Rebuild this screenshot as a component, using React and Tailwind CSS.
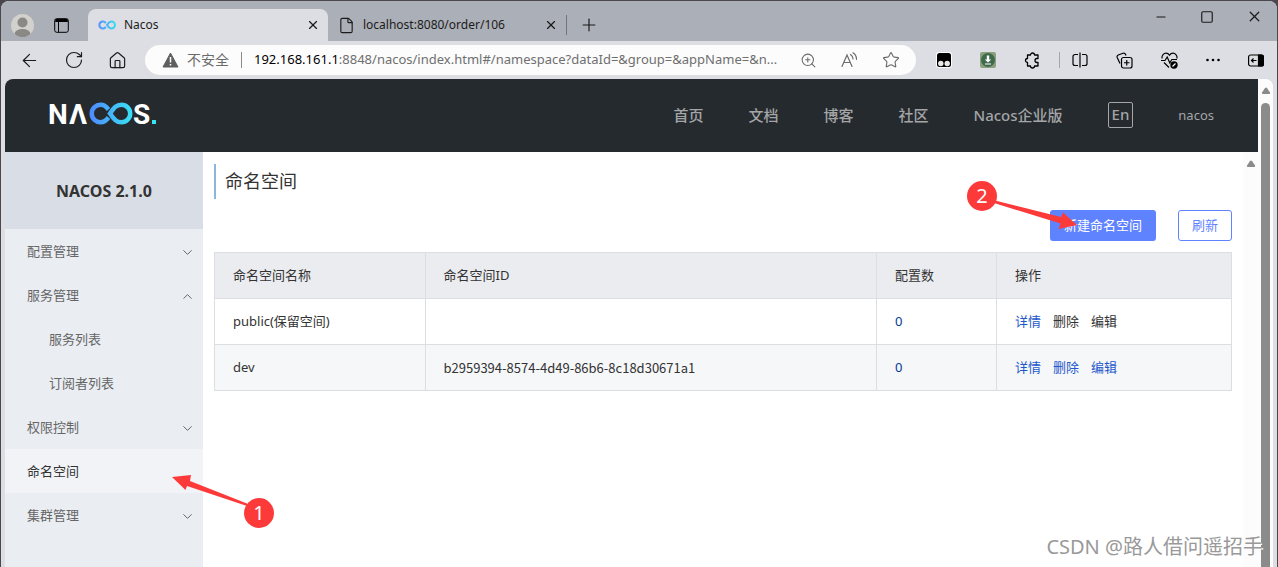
import { useState } from "react";
import { ArrowLeft, ChevronDown, ChevronUp, File, House, Minus, Plus, RotateCw, Square, Star, X, ZoomIn } from "lucide-react";

const NAV_LINKS = ["首页", "文档", "博客", "社区", "Nacos企业版"];

const MENU = [
  { title: "配置管理", open: false, children: [] },
  { title: "服务管理", open: true, children: ["服务列表", "订阅者列表"] },
  { title: "权限控制", open: false, children: [] },
  { title: "命名空间", active: true },
  { title: "集群管理", open: false, children: [] },
];

const NAMESPACES = [
  { name: "public(保留空间)", id: "", count: 0, locked: true },
  { name: "dev", id: "b2959394-8574-4d49-86b6-8c18d30671a1", count: 0, locked: false },
];

function InfinityIcon() {
  return (
    <svg width="18" height="10" viewBox="0 0 44 22" fill="none" strokeWidth="5">
      <defs>
        <linearGradient id="tab-loop" x1="0" y1="0" x2="44" y2="0" gradientUnits="userSpaceOnUse">
          <stop stopColor="#5a8dff" />
          <stop offset="1" stopColor="#38e0f0" />
        </linearGradient>
      </defs>
      <path d="M19 6.500A8.500 8.500 0 1 0 19 15.500M22 11C26 5 28 2.500 33 2.500A8.500 8.500 0 0 1 33 19.500C28 19.500 26 17 22 11Z" stroke="url(#tab-loop)" />
    </svg>
  );
}

function NacosLogo() {
  return (
    <svg width="112" height="44" viewBox="-2 -10 112 44" role="img" aria-label="NACOS" className="font-['Roboto',sans-serif] font-bold">
      <defs>
        <linearGradient id="logo-loop" x1="40" y1="0" x2="84" y2="0" gradientUnits="userSpaceOnUse">
          <stop stopColor="#5088ff" />
          <stop offset="1" stopColor="#38e4f4" />
        </linearGradient>
      </defs>
      <text x="-1" y="22" fontSize="28" fill="#fff">N</text>
      <text x="20" y="22" fontSize="28" fill="#fff">Λ</text>
      <path
        d="M59.500 7.500L58 5.800A8.700 8.700 0 1 0 58 17.200L59.500 15.500M61 11.500C65 6 67 2.800 72.500 2.800A8.700 8.700 0 0 1 72.500 20.200C67 20.200 65 17 61 11.500Z"
        fill="none"
        stroke="url(#logo-loop)"
        strokeWidth="4.500"
      />
      <text x="84" y="22" fontSize="28" fill="#fff">S</text>
      <rect x="103" y="18" width="4" height="4" fill="#38e4f4" />
    </svg>
  );
}

function TabStrip() {
  return (
    <div className="flex h-10 items-end bg-[#abafb7] text-xs text-[#1b1b1b]">
      <div className="flex h-8 w-[87px] items-center gap-5 pl-2.5">
        <button aria-label="Profile">
          <svg width="23" height="23" viewBox="0 0 23 23">
            <defs>
              <clipPath id="avatar">
                <circle cx="11.500" cy="11.500" r="11.500" />
              </clipPath>
            </defs>
            <g clipPath="url(#avatar)">
              <rect width="23" height="23" fill="#d3d1cd" />
              <circle cx="11.500" cy="8.500" r="5" fill="#8b8986" />
              <ellipse cx="11.500" cy="20" rx="8" ry="5" fill="#8b8986" />
            </g>
          </svg>
        </button>
        <button aria-label="Tab actions">
          <svg width="15" height="15" viewBox="0 0 15 15" fill="none" stroke="#000">
            <rect x=".7" y=".7" width="13.600" height="13.600" rx="2" />
            <path d="M1 3h13M4.500 4v10" />
            <path d="M1.500 2.500h12" strokeWidth="3" />
          </svg>
        </button>
      </div>
      <div className="flex h-8 w-60 items-center rounded-t-lg bg-[#dddee3] pr-2 pl-2.5">
        <InfinityIcon />
        <span className="ml-2 flex-1">Nacos</span>
        <button aria-label="Close Nacos">
          <X size={14} strokeWidth={2} />
        </button>
      </div>
      <div className="flex h-8 w-[238px] items-center pr-2 pl-2.5">
        <File size={17} strokeWidth={1.6} />
        <span className="ml-2 flex-1">localhost:8080/order/106</span>
        <button aria-label="Close localhost">
          <X size={14} strokeWidth={2} />
        </button>
      </div>
      <div className="flex h-8 items-center gap-3">
        <span className="h-5 w-px bg-[#71747a]" />
        <button aria-label="New tab">
          <Plus size={20} strokeWidth={1.4} />
        </button>
      </div>
      <div className="flex flex-1 items-center justify-end gap-8 self-start pt-[7px] pr-3.5">
        <button aria-label="Minimize">
          <Minus size={14} strokeWidth={1.8} />
        </button>
        <button aria-label="Maximize">
          <Square size={14} strokeWidth={2} />
        </button>
        <button aria-label="Close window">
          <X size={17} strokeWidth={1.8} />
        </button>
      </div>
    </div>
  );
}

function Toolbar() {
  return (
    <div className="flex h-[38px] items-center bg-[#dddee3] text-[#1b1b1b]">
      <div className="flex w-36 items-center gap-6 pl-[18px]">
        <button aria-label="Back">
          <ArrowLeft size={21} strokeWidth={1.4} />
        </button>
        <button aria-label="Refresh">
          <RotateCw size={20} strokeWidth={1.4} />
        </button>
        <button aria-label="Home">
          <House size={19} strokeWidth={1.5} />
        </button>
      </div>
      <div className="flex h-[30px] min-w-0 flex-1 items-center rounded-full bg-[#fcfcfd] pr-4 pl-[17px]">
        <svg width="17" height="16" viewBox="0 0 17 16">
          <path d="M8.500 1L16 15H1Z" fill="#5f5f5f" stroke="#5f5f5f" strokeLinejoin="round" />
          <path d="M8.500 5v5.500M8.500 12v1.500" stroke="#fff" strokeWidth="1.500" />
        </svg>
        <span className="ml-2 text-sm text-[#6b6b6b]">不安全</span>
        <span className="mx-3 h-4 w-px bg-[#8a8a8a]" />
        <button className="min-w-0 flex-1 truncate text-left text-[13px] text-[#6f6f6f]">
          <span className="text-black">192.168.161.1</span>:8848/nacos/index.html#/namespace?dataId=&amp;group=&amp;appName=&amp;n...
        </button>
        <div className="flex items-center gap-6 pl-3 text-[#6b6b6b]">
          <button aria-label="Zoom">
            <ZoomIn size={17} strokeWidth={1.5} />
          </button>
          <button aria-label="Read aloud">
            <svg width="17" height="16" viewBox="0 0 17 16" fill="none" stroke="currentColor" strokeWidth="1.200" strokeLinecap="round">
              <path d="M1 14.500L6 3l5 11.500M2.800 10.500h6.500M9.500 2.500q2.500 1.500 2.500 4.500M12 .8q3.500 2.200 3.500 6.500" />
            </svg>
          </button>
          <button aria-label="Favorite">
            <Star size={18} strokeWidth={1.5} />
          </button>
        </div>
      </div>
      <div className="flex w-[361px] items-center justify-end pr-[13px]">
        <div className="flex items-center gap-7">
          <button aria-label="Scripts">
            <svg width="16" height="16" viewBox="0 0 16 16">
              <rect width="16" height="16" rx="3" fill="#fff" />
              <rect x="1" y="1" width="14" height="14" rx="2.500" fill="#000" />
              <circle cx="4.800" cy="11.500" r="2.700" fill="#e9e9e9" />
              <circle cx="11.200" cy="11.500" r="2.700" fill="#e9e9e9" />
            </svg>
          </button>
          <button aria-label="Downloader">
            <svg width="16" height="16" viewBox="0 0 16 16">
              <rect width="16" height="16" rx="2" fill="#8aa07e" />
              <circle cx="8" cy="8" r="7" fill="#3f6b4c" />
              <path d="M6.800 3.500h2.400v4h2L8 10.500 4.800 7.500h2ZM5 11.500h6v1H5Z" fill="#fff" />
            </svg>
          </button>
          <button aria-label="Extensions">
            <svg width="17" height="17" viewBox="0 0 17 17" fill="none" stroke="#000" strokeWidth="1.300" strokeLinejoin="round">
              <path d="M3.500 3h3a2 2 0 0 1 4 0H14v3.500h-1a2 2 0 0 0 0 4h1V14h-3.500a2 2 0 0 1-4 0h-3v-3.500a2 2 0 0 1 0-4Z" />
            </svg>
          </button>
        </div>
        <span className="mr-3 ml-[18px] h-4 w-px bg-[#a3a5aa]" />
        <div className="flex items-center gap-7">
          <button aria-label="Split screen">
            <svg width="16" height="16" viewBox="0 0 16 16" fill="none" stroke="#000" strokeWidth="1.200">
              <path d="M6 2.500H3a2 2 0 0 0-2 2v7a2 2 0 0 0 2 2h3M10 2.500h3a2 2 0 0 1 2 2v7a2 2 0 0 1-2 2h-3M8 .5v15" />
            </svg>
          </button>
          <button aria-label="Collections">
            <svg width="17" height="17" viewBox="0 0 17 17" fill="none" stroke="#000" strokeWidth="1.200">
              <rect x="5.500" y="5.500" width="10.500" height="10.500" rx="2" />
              <path d="M10.750 8v5.500M8 10.750h5.500M4 11.500L1.200 5.500a2 2 0 0 1 1-2.500L7 1.200a2 2 0 0 1 2.500 1L10 3.500" />
            </svg>
          </button>
          <button aria-label="Browser essentials">
            <svg width="17" height="17" viewBox="0 0 17 17" fill="none" stroke="#000" strokeWidth="1.200">
              <path d="M1 6.500C.5 3 3 1.200 5 1.200c1.500 0 2.700.7 3.500 2 .8-1.300 2-2 3.500-2 2 0 4.500 1.800 4 5.300M0 8.500h4L6.200 5l2.600 6 2-3.500H16M3 10.500l5 5" />
              <circle cx="13" cy="13" r="3.700" fill="#000" stroke="none" />
              <path d="M11.500 14.500l3-3" stroke="#fff" />
            </svg>
          </button>
          <button aria-label="Settings and more">
            <svg width="14" height="4" viewBox="0 0 14 4" fill="#000">
              <circle cx="1.500" cy="2" r="1.300" />
              <circle cx="7" cy="2" r="1.300" />
              <circle cx="12.500" cy="2" r="1.300" />
            </svg>
          </button>
          <button aria-label="Toggle sidebar">
            <svg width="16" height="13" viewBox="0 0 16 13" fill="none" stroke="#000" strokeWidth="1.200">
              <rect x=".6" y="1" width="14.800" height="11" rx="2" />
              <path d="M10.500 1h3a2 2 0 0 1 2 2v7a2 2 0 0 1-2 2h-3Z" fill="#000" />
              <path d="M8.500 6.500h-5M5.500 4.500l-2 2 2 2" />
            </svg>
          </button>
        </div>
      </div>
    </div>
  );
}

function SiteHeader() {
  return (
    <header className="flex h-[73px] items-center justify-between bg-[#252a2e] px-11">
      <a href="#home" className="-ml-0.5 -mt-1">
        <NacosLogo />
      </a>
      <nav className="flex items-center gap-[45px] text-[15px] font-medium text-[#a3a5a7]">
        {NAV_LINKS.map((label) => (
          <a key={label} href="#nav">
            {label}
          </a>
        ))}
        <button className="mb-0.5 flex h-[26px] items-center rounded-xs border border-[#a3a5a7] px-[3px] pb-0.5 leading-5">En</button>
        <a href="#user" className="text-[13px] font-normal">
          nacos
        </a>
      </nav>
    </header>
  );
}

function SideMenu() {
  const [openItems, setOpenItems] = useState(MENU.filter((m) => m.open).map((m) => m.title));

  const toggle = (title) => {
    setOpenItems((prev) => (prev.includes(title) ? prev.filter((t) => t !== title) : [...prev, title]));
  };

  return (
    <aside className="z-10 w-[198px] shrink-0 bg-[#eaedf2] text-[13px] text-[#666]">
      <h2 className="flex h-[77px] items-center justify-center bg-[#d9dde5] text-base font-bold text-[#333]">NACOS 2.1.0</h2>
      <ul>
        {MENU.map((item) => {
          const open = openItems.includes(item.title);
          if (!item.children) {
            return (
              <li key={item.title} className="relative bg-[#f2f3f7] text-[#333]">
                <a href="#namespace" className="flex h-11 items-center pt-0.5 pl-[22px]">
                  {item.title}
                </a>
                <MarkerOne />
              </li>
            );
          }
          return (
            <li key={item.title}>
              <button className="flex h-11 w-full items-center justify-between pt-0.5 pr-2 pl-[22px]" onClick={() => toggle(item.title)}>
                {item.title}
                {open ? <ChevronUp size={15} strokeWidth={1.6} /> : <ChevronDown size={15} strokeWidth={1.6} />}
              </button>
              {open &&
                item.children.map((child) => (
                  <a key={child} href="#service" className="flex h-11 items-center pt-0.5 pl-11">
                    {child}
                  </a>
                ))}
            </li>
          );
        })}
      </ul>
    </aside>
  );
}

function MarkerOne() {
  return (
    <div className="pointer-events-none absolute top-[25px] left-[167px] h-[54px] w-[102px] text-white">
      <svg width="102" height="54" viewBox="0 0 102 54" fill="#fd3a3a">
        <path d="M0 3L19 1l-1 6 57 22.500v2.500L15 12l-1.500 4Z" />
        <circle cx="87" cy="39" r="15" />
      </svg>
      <span className="absolute right-0 bottom-0 w-[30px] text-center text-xl leading-[30px]">1</span>
    </div>
  );
}

function MarkerTwo() {
  return (
    <div className="pointer-events-none absolute -top-[29px] -left-[83px] h-[54px] w-[112px] text-white">
      <svg width="112" height="54" viewBox="0 0 112 54" fill="#fd3a3a">
        <path d="M28 19.500L94 36l2-4.500L110 44l-18.500 4 2-5.500L27 22Z" />
        <circle cx="15" cy="15" r="15" />
      </svg>
      <span className="absolute top-0 left-0 w-[30px] text-center text-xl leading-[30px]">2</span>
    </div>
  );
}

function NamespaceTable() {
  return (
    <table className="mt-[11px] w-full table-fixed border-collapse text-left text-[13px] text-[#333] [&_td]:border [&_td]:border-[#dcdee3] [&_td]:px-[18px] [&_th]:border [&_th]:border-[#dcdee3] [&_th]:px-[18px] [&_th]:font-normal">
      <colgroup>
        <col className="w-[20.7%]" />
        <col className="w-[44.4%]" />
        <col className="w-[11.8%]" />
        <col />
      </colgroup>
      <thead>
        <tr className="h-[46px] bg-[#ebecf0]">
          <th>命名空间名称</th>
          <th>命名空间ID</th>
          <th>配置数</th>
          <th>操作</th>
        </tr>
      </thead>
      <tbody>
        {NAMESPACES.map((ns) => (
          <tr key={ns.name} className="h-[46px] even:bg-[#f6f7f9]">
            <td>{ns.name}</td>
            <td className="font-['Noto_Sans_CJK_SC',sans-serif]">{ns.id}</td>
            <td className="text-[#033b91]">{ns.count}</td>
            <td>
              <div className="flex gap-3 text-[#2457cc]">
                <button>详情</button>
                <button className={ns.locked ? "text-[#333]" : ""}>删除</button>
                <button className={ns.locked ? "text-[#333]" : ""}>编辑</button>
              </div>
            </td>
          </tr>
        ))}
      </tbody>
    </table>
  );
}

function ScrollArrow() {
  return (
    <svg width="10" height="8" viewBox="0 0 10 8" fill="#8b8b8b">
      <path d="M4 1q1-1 2 0l3 4.500q.6 1.500-1 1.500H2Q.4 7 1 5.500Z" />
    </svg>
  );
}

export default function App() {
  return (
    <div className="h-screen overflow-hidden bg-[#4b474d] px-px pt-px font-['Noto_Sans','Noto_Sans_CJK_SC',sans-serif]">
      <div className="relative flex h-full flex-col overflow-hidden rounded-t-lg bg-[#dddee3]">
        <TabStrip />
        <Toolbar />
        <div className="mx-1 flex min-h-0 flex-1 overflow-hidden rounded-t-lg bg-white">
          <div className="flex min-w-0 flex-1 flex-col">
            <SiteHeader />
            <div className="flex min-h-0 flex-1">
              <SideMenu />
              <main className="min-w-0 flex-1 px-[11px] pt-3">
                <h1 className="border-l-2 border-[#88b7e0] pl-[9px] text-lg leading-[35px] text-[#333]">命名空间</h1>
                <div className="mt-[11px] flex justify-end gap-[22px] text-[13px]">
                  <div className="relative">
                    <button className="h-[31px] rounded-[3px] bg-[#5f83ff] px-3.5 text-white">新建命名空间</button>
                    <MarkerTwo />
                  </div>
                  <button className="h-[31px] rounded-[3px] border border-[#5f83ff] px-[13px] text-[#5f83ff]">刷新</button>
                </div>
                <NamespaceTable />
              </main>
              <div className="flex w-[15px] justify-center bg-[#fcfcfc] pt-2">
                <ScrollArrow />
              </div>
            </div>
          </div>
          <div className="flex w-[15px] flex-col items-center gap-2 bg-[#fcfcfc] pt-2">
            <ScrollArrow />
            <div className="w-[9px] flex-1 rounded-t-full bg-[#8b8b8b]" />
          </div>
        </div>
        <p className="pointer-events-none absolute right-3.5 bottom-1.5 text-xl leading-7 text-[#999] [text-shadow:1px_1px_0_#fff]">CSDN @路人借问遥招手</p>
      </div>
    </div>
  );
}
